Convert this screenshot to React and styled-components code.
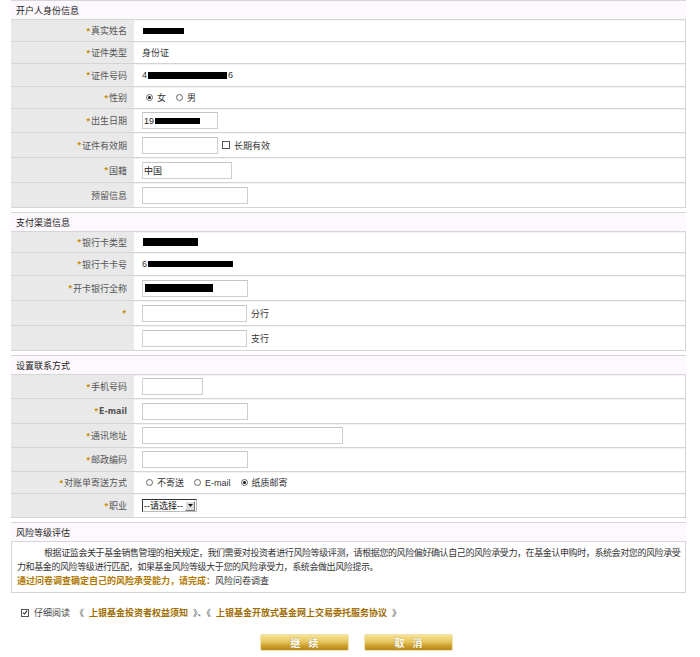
import React from "react";
import styled, { createGlobalStyle } from "styled-components";

const GlobalStyle = createGlobalStyle`
  body {
    margin: 0;
    background: #ffffff;
    font-family: "Liberation Sans", "Noto Sans CJK SC", sans-serif;
    font-size: 9px;
    color: #333333;
  }
  * { box-sizing: border-box; }
`;

function Star() {
  return <Req>*</Req>;
}

function Redact({ w, h = 6 }) {
  return <Block style={{ width: w, height: h }} />;
}

function Radio({ checked, children }) {
  return (
    <Choice>
      <RadioDot checked={checked} />
      {children}
    </Choice>
  );
}

function Check({ checked }) {
  return (
    <CheckBox>
      {checked && (
        <svg width="7" height="7" viewBox="0 0 7 7">
          <path d="M1 3.5 L2.8 5.3 L6 1.4" stroke="#222" strokeWidth="1.2" fill="none" />
        </svg>
      )}
    </CheckBox>
  );
}

function Row({ label, star = true, h = 22, children }) {
  return (
    <RowBox h={h}>
      <Label>
        {star && <Star />}
        {label}
      </Label>
      <Value>{children}</Value>
    </RowBox>
  );
}

function App() {
  return (
    <Page>
      <GlobalStyle />
      <Section>
        <Header>开户人身份信息</Header>
        <Row label="真实姓名">
          <Redact w={41} />
        </Row>
        <Row label="证件类型">身份证</Row>
        <Row label="证件号码" h={23}>
          4<Redact w={79} h={7} />6
        </Row>
        <Row label="性别">
          <Radio checked>女</Radio>
          <Radio>男</Radio>
        </Row>
        <Row label="出生日期" h={24}>
          <Field w={76}>
            19<Redact w={45} />
          </Field>
        </Row>
        <Row label="证件有效期" h={25}>
          <Field w={76} />
          <Choice>
            <Check />
            长期有效
          </Choice>
        </Row>
        <Row label="国籍" h={25}>
          <Field w={90}>中国</Field>
        </Row>
        <Row label="预留信息" star={false} h={25}>
          <Field w={106} />
        </Row>
      </Section>

      <Section>
        <Header>支付渠道信息</Header>
        <Row label="银行卡类型" h={21}>
          <Redact w={55} h={8} />
        </Row>
        <Row label="银行卡卡号" h={23}>
          6<Redact w={85} />
        </Row>
        <Row label="开卡银行全称" h={25}>
          <Field w={106}>
            <Redact w={68} h={8} />
          </Field>
        </Row>
        <Row label="" h={25}>
          <Field w={105} />
          <Suffix>分行</Suffix>
        </Row>
        <Row label="" star={false} h={25}>
          <Field w={105} />
          <Suffix>支行</Suffix>
        </Row>
      </Section>

      <Section>
        <Header>设置联系方式</Header>
        <Row label="手机号码" h={24}>
          <Field w={61} />
        </Row>
        <Row label={<Latin>E-mail</Latin>} h={25}>
          <Field w={106} />
        </Row>
        <Row label="通讯地址" h={24}>
          <Field w={201} />
        </Row>
        <Row label="邮政编码" h={24}>
          <Field w={106} />
        </Row>
        <Row label="对账单寄送方式" h={22}>
          <Radio>不寄送</Radio>
          <Radio>E-mail</Radio>
          <Radio checked>纸质邮寄</Radio>
        </Row>
        <Row label="职业" h={24}>
          <Select>
            <span>--请选择--</span>
            <Arrow>
              <svg width="5" height="3" viewBox="0 0 5 3">
                <path d="M0 0 H5 L2.5 3 Z" fill="#111" />
              </svg>
            </Arrow>
          </Select>
        </Row>
      </Section>

      <Section>
        <Header>风险等级评估</Header>
        <RiskBox>
          <Para>
            根据证监会关于基金销售管理的相关规定，我们需要对投资者进行风险等级评测，请根据您的风险偏好确认自己的风险承受力，在基金认申购时，系统会对您的风险承受力和基金的风险等级进行匹配，如果基金风险等级大于您的风险承受力，系统会做出风险提示。
          </Para>
          <Notice>
            通过问卷调查确定自己的风险承受能力，请完成：<Plain>风险问卷调查</Plain>
          </Notice>
        </RiskBox>
      </Section>

      <Agree>
        <Check checked />
        <span>仔细阅读</span>
        <span>《</span>
        <Doc>上银基金投资者权益须知</Doc>
        <span>》、《</span>
        <Doc>上银基金开放式基金网上交易委托服务协议</Doc>
        <span>》</span>
      </Agree>

      <Buttons>
        <GoldButton>继续</GoldButton>
        <GoldButton>取消</GoldButton>
      </Buttons>
    </Page>
  );
}

const Page = styled.div`
  width: 686px;
  padding-left: 11px;
  padding-bottom: 6px;
`;
const Section = styled.section`
  margin-top: 4px;
  &:first-of-type {
    margin-top: 0;
  }
`;
const Header = styled.div`
  height: 20px;
  padding-left: 5px;
  display: flex;
  align-items: center;
  background: #fdf8fd;
  border-top: 1px solid #d6d6d6;
  border-bottom: 1px solid #d6d6d6;
  color: #222;
  font-size: 9px;
`;
const RowBox = styled.div`
  display: grid;
  grid-template-columns: 123px 1fr;
  height: ${(props) => props.h}px;
  border-bottom: 1px solid #d4d4d4;
  border-right: 1px solid #d4d4d4;
  box-shadow: inset 0 1px 0 #f3f3f3;
`;
const Label = styled.div`
  background: #e9e9e9;
  color: #555;
  display: flex;
  align-items: center;
  justify-content: flex-end;
  padding-right: 7px;
`;
const Req = styled.span`
  color: #c98a00;
  font-size: 9px;
  font-weight: bold;
  margin-right: 1px;
`;
const Latin = styled.span`
  font-family: "DejaVu Sans", sans-serif;
  font-weight: bold;
  font-size: 8px;
  color: #555;
`;
const Value = styled.div`
  display: flex;
  align-items: center;
  padding-left: 8px;
  color: #333;
`;
const Block = styled.span`
  display: inline-block;
  background: #000;
  margin: 0 1px;
`;
const Field = styled.div`
  width: ${(props) => props.w}px;
  height: 17px;
  border: 1px solid #cfcfcf;
  border-top-color: #c4c4c4;
  background: #fff;
  display: flex;
  align-items: center;
  padding-left: 1px;
  color: #222;
`;
const Suffix = styled.span`
  margin-left: 4px;
  color: #333;
`;
const Choice = styled.span`
  display: inline-flex;
  align-items: center;
  gap: 4px;
  margin-left: 4px;
  margin-right: 6px;
  color: #333;
`;
const RadioDot = styled.span`
  width: 7px;
  height: 7px;
  border-radius: 50%;
  border: 1px solid #666;
  background: #fff;
  display: inline-flex;
  align-items: center;
  justify-content: center;
  &::after {
    content: "";
    width: 3px;
    height: 3px;
    border-radius: 50%;
    background: ${(props) => (props.checked ? "#111" : "transparent")};
  }
`;
const CheckBox = styled.span`
  width: 8px;
  height: 8px;
  border: 1px solid #555;
  background: #fff;
  display: inline-flex;
  align-items: center;
  justify-content: center;
`;
const Select = styled.div`
  width: 55px;
  height: 13px;
  display: flex;
  align-items: center;
  justify-content: space-between;
  border: 1px solid;
  border-color: #333 #bbb #bbb #333;
  padding-left: 1px;
  color: #111;
`;
const Arrow = styled.span`
  width: 10px;
  height: 10px;
  margin-right: 1px;
  background: #dcdcdc;
  border: 1px solid;
  border-color: #fff #777 #777 #fff;
  display: flex;
  align-items: center;
  justify-content: center;
`;
const RiskBox = styled.div`
  height: 51px;
  border: 1px solid #d4d4d4;
  border-top: none;
  padding: 4px 4px 0 5px;
  line-height: 14px;
`;
const Para = styled.p`
  margin: 0;
  text-indent: 27px;
  color: #333;
  letter-spacing: -0.4px;
`;
const Notice = styled.div`
  color: #b07800;
  font-weight: bold;
`;
const Plain = styled.span`
  color: #333;
  font-weight: normal;
`;
const Agree = styled.div`
  display: flex;
  align-items: center;
  gap: 5px;
  margin-top: 13px;
  padding-left: 10px;
  color: #444;
  font-size: 9px;
`;
const Doc = styled.span`
  color: #a06c00;
  font-weight: bold;
`;
const Buttons = styled.div`
  display: flex;
  gap: 15px;
  margin-top: 15px;
  padding-left: 249px;
`;
const GoldButton = styled.button`
  width: 89px;
  height: 17px;
  padding: 0;
  border: 1px solid #efe2b0;
  border-radius: 2px;
  background: linear-gradient(#f6e395, #e6c65e 45%, #c99d2c 75%, #b68818);
  color: #fff;
  font-family: "Noto Sans CJK SC", sans-serif;
  font-size: 10px;
  font-weight: bold;
  letter-spacing: 8px;
  text-indent: 8px;
  text-shadow: 0 0 1px #a37a10;
  line-height: 15px;
`;

export default App;
